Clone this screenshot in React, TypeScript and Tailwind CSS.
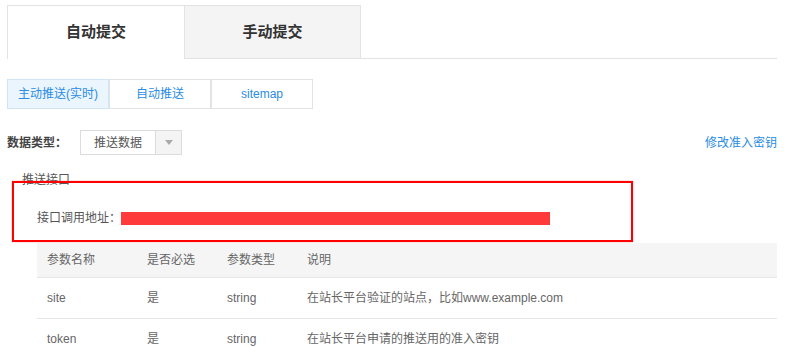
import React from 'react';

const rows = [
  { name: 'site', required: '是', type: 'string', desc: '在站长平台验证的站点，比如www.example.com' },
  { name: 'token', required: '是', type: 'string', desc: '在站长平台申请的推送用的准入密钥' },
];

export default function App() {
  return (
    <div
      className="relative w-[797px] h-[347px] overflow-hidden bg-white text-[12px] text-[#555]"
      style={{ fontFamily: '"Liberation Sans", "Noto Sans CJK SC", sans-serif' }}
    >
      {/* 提交方式 tabs */}
      <div className="ml-[7px] mt-[5px] flex h-[54px] w-[770px]">
        <div className="flex w-[177px] items-center justify-center border-l border-t border-[#e3e3e3] bg-white text-[15px] font-bold text-[#333]">
          自动提交
        </div>
        <div className="flex w-[177px] items-center justify-center border border-[#e3e3e3] bg-[#f4f4f4] text-[15px] font-bold text-[#333]">
          手动提交
        </div>
        <div className="flex-1 border-b border-[#e3e3e3]" />
      </div>

      {/* 推送方式 */}
      <div className="ml-[7px] mt-[20px] flex h-[30px]">
        <div className="flex w-[102px] items-center justify-center border border-[#cfe4f6] bg-[#eaf5fe] text-[#2a8ce2]">
          主动推送(实时)
        </div>
        <div className="flex w-[102px] items-center justify-center border border-[#e3e3e3] text-[#2a8ce2]">
          自动推送
        </div>
        <div className="flex w-[102px] items-center justify-center border border-[#e3e3e3] text-[#2a8ce2]">
          sitemap
        </div>
      </div>

      {/* 数据类型 */}
      <div className="ml-[7px] mt-[21px] flex h-[25px] w-[770px] items-center">
        <span className="w-[73px] font-bold text-[#444]">数据类型：</span>
        <div className="flex h-[25px] w-[102px] border border-[#dcdcdc]">
          <div className="flex w-[75px] items-center justify-center border-r border-[#dcdcdc] text-[#555]">推送数据</div>
          <div className="flex flex-1 items-center justify-center bg-[#f4f4f4]">
            <span className="h-0 w-0 border-x-[4px] border-t-[5px] border-x-transparent border-t-[#aaa]" />
          </div>
        </div>
        <span className="ml-auto text-[#2a8ce2]">修改准入密钥</span>
      </div>

      {/* 推送接口 */}
      <div className="ml-[22px] mt-[17px] h-[16px] leading-[16px]">推送接口</div>
      <div className="ml-[37px] mt-[22px] flex h-[16px] items-center">
        <span className="w-[84px] leading-[16px]">接口调用地址：</span>
        <span className="h-[13px] w-[429px] bg-[#ff3a3a]" />
      </div>

      {/* 参数表 */}
      <div className="ml-[37px] mt-[17px] w-[740px]">
        <div className="flex h-[35px] items-center border-b border-[#e6e6e6] bg-[#f5f5f5] pl-[10px] text-[#666]">
          <span className="w-[100px]">参数名称</span>
          <span className="w-[80px]">是否必选</span>
          <span className="w-[80px]">参数类型</span>
          <span>说明</span>
        </div>
        {rows.map((r) => (
          <div key={r.name} className="flex h-[41px] items-center border-b border-[#e6e6e6] pl-[10px] text-[#666]">
            <span className="w-[100px]">{r.name}</span>
            <span className="w-[80px]">{r.required}</span>
            <span className="w-[80px]">{r.type}</span>
            <span>{r.desc}</span>
          </div>
        ))}
      </div>

      {/* 标注框 */}
      <div className="pointer-events-none absolute left-[12px] top-[181px] h-[61px] w-[621px] border-2 border-[#f00] shadow-[0_0_1px_#f66]" />
    </div>
  );
}
